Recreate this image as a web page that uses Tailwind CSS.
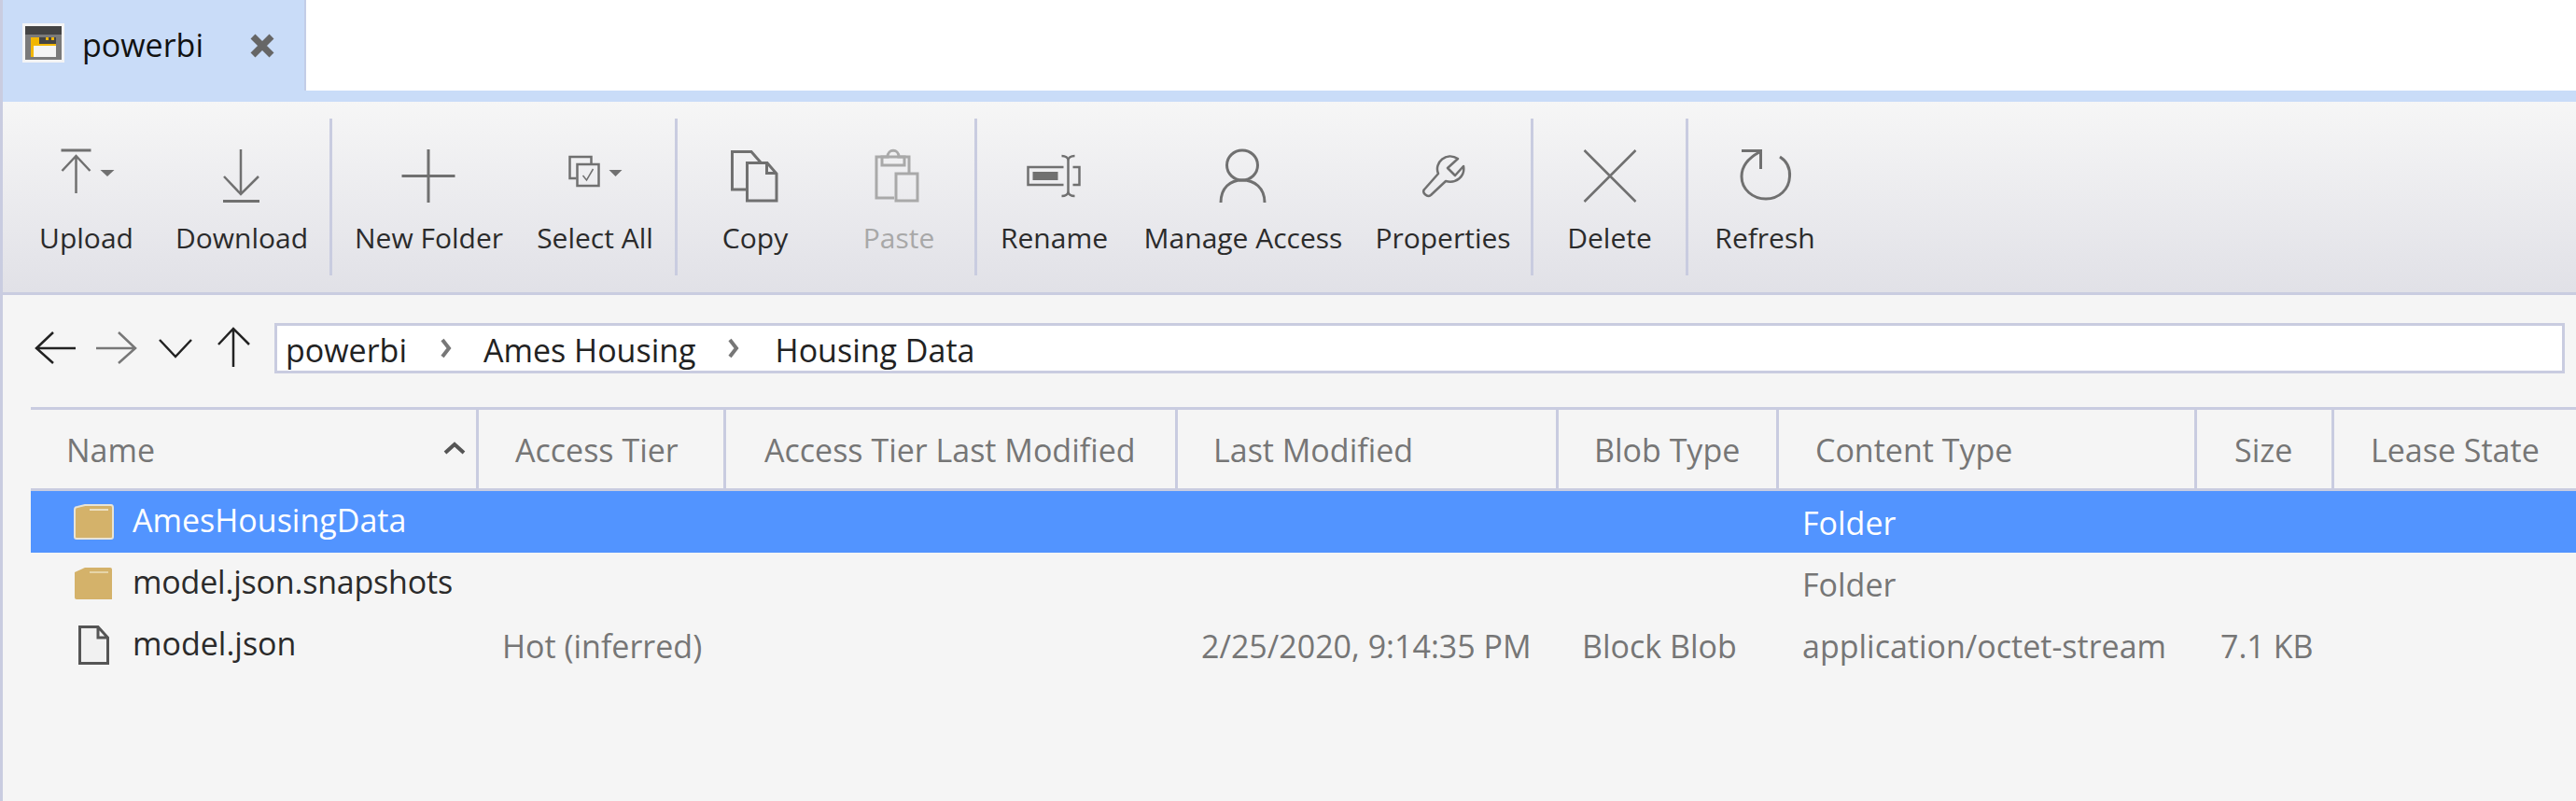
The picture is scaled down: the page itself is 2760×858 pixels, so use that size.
<!DOCTYPE html>
<html>
<head>
<meta charset="utf-8">
<script src="https://cdn.jsdelivr.net/npm/@tailwindcss/browser@4"></script>
</head>
<body class="w-[2760px] h-[858px] overflow-hidden bg-[#f5f5f5] font-['Open_Sans',sans-serif] text-[34px] leading-[44px]">
<div class="flex h-[858px] border-l-[3px] border-[#c9cce0]">
<div class="flex-1 flex flex-col min-w-0">

  <!-- Tab strip -->
  <div class="flex h-[97px] bg-white">
    <div class="w-[325px] bg-[#c9dcf8] border-r-[2px] border-[#c3cde6] flex items-start pt-[25px] pl-[21px]">
      <svg width="45" height="42" viewBox="24 25 45 42">
        <rect x="24" y="25" width="45" height="42" fill="#f4f4f4"/>
        <rect x="27" y="28" width="39" height="9" fill="#444"/>
        <rect x="27" y="37" width="39" height="27" fill="#7a7a7a"/>
        <rect x="33" y="40" width="27" height="21" fill="#f2b600"/>
        <rect x="36" y="49" width="24" height="12" fill="#f4f4f4"/>
        <rect x="42" y="40" width="18" height="7" fill="#444"/>
        <rect x="49" y="40" width="3" height="3" fill="#f2b600"/>
        <rect x="55" y="40" width="3" height="3" fill="#f2b600"/>
      </svg>
      <span class="ml-[19px] text-[#111] mt-[1px]">powerbi</span>
      <svg class="ml-[50px] mt-[11px]" width="26" height="26" viewBox="0 0 26 26">
        <path d="M3 3 L23 23 M23 3 L3 23" stroke="#666" stroke-width="7" fill="none"/>
      </svg>
    </div>
    <div class="flex-1"></div>
  </div>
  <div class="h-[12px] bg-[#c9dcf8]"></div>

  <!-- Toolbar -->
  <div class="h-[204px] bg-gradient-to-b from-[#f6f6f6] to-[#e1e1e7] flex items-stretch py-[18px] text-[#2b2b2b] text-[30px] leading-[40px]">
    <div class="w-[179px] flex flex-col items-center pt-[31px]">
      <svg width="80" height="60" viewBox="52.5 158 80 60" fill="none" stroke="#707070" stroke-width="2.5">
        <path d="M65 161 H97" stroke-width="3"/><path d="M81 207 V168 M66 183 L81 167 L96 183"/>
        <path d="M107 182 H122 L114.5 189 Z" fill="#707070" stroke="none"/>
      </svg>
      <span class="mt-[17px]">Upload</span>
    </div>
    <div class="w-[154px] flex flex-col items-center pt-[31px]">
      <svg width="80" height="60" viewBox="219 158 80 60" fill="none" stroke="#707070" stroke-width="2.5">
        <path d="M258 160 V207 M240 189 L258 208 L277 189"/><path d="M239 215.500 H278" stroke-width="3"/>
      </svg>
      <span class="mt-[17px]">Download</span>
    </div>
    <div class="w-[3px] ml-[17px] bg-[#c9cce0]"></div>
    <div class="w-[207px] flex flex-col items-center pt-[31px]">
      <svg width="80" height="60" viewBox="419.500 158 80 60" fill="none" stroke="#707070" stroke-width="3">
        <path d="M458.500 160 V217 M430 188.500 H487"/>
      </svg>
      <span class="mt-[17px]">New Folder</span>
    </div>
    <div class="w-[149px] flex flex-col items-center pt-[31px]">
      <svg width="80" height="60" viewBox="597.500 158 80 60" fill="none" stroke="#707070" stroke-width="2.500">
        <path d="M617 191 H610 V168 H633 V175"/><rect x="618" y="176" width="23" height="23"/>
        <path d="M624 188 L628 193 L635 181" stroke-width="1.500"/>
        <path d="M652 182 H666 L659 189 Z" fill="#707070" stroke="none"/>
      </svg>
      <span class="mt-[17px]">Select All</span>
    </div>
    <div class="w-[3px] ml-[11px] bg-[#c9cce0]"></div>
    <div class="w-[166px] flex flex-col items-center pt-[31px]">
      <svg width="80" height="60" viewBox="769 158 80 60" fill="none" stroke="#707070" stroke-width="3">
        <path d="M799 203 H784.500 V162.500 H805 L815 174"/>
        <path d="M800.500 174.500 H822 L832 186 V215 H800.500 Z M821.500 174.500 V185.500 H832"/>
      </svg>
      <span class="mt-[17px]">Copy</span>
    </div>
    <div class="w-[142px] flex flex-col items-center pt-[31px]">
      <svg width="80" height="60" viewBox="923 158 80 60" fill="none" stroke="#a9a9a9" stroke-width="3">
        <path d="M958 212 H939 V168 H974 V185"/>
        <path d="M945 168 V177 H969 V168 H963 C963 159 951 159 951 168 Z"/>
        <rect x="960" y="186" width="23" height="29"/>
      </svg>
      <span class="mt-[17px] text-[#a8a8a8]">Paste</span>
    </div>
    <div class="w-[3px] ml-[10px] bg-[#c9cce0]"></div>
    <div class="w-[165px] flex flex-col items-center pt-[31px]">
      <svg width="80" height="60" viewBox="1089.500 158 80 60" fill="none" stroke="#707070" stroke-width="2.500">
        <path d="M1139 179 H1101 V198 H1139"/>
        <rect x="1106" y="184" width="27" height="9" fill="#707070" stroke="none"/>
        <path d="M1137 167 C1141 167 1144 169 1144 172 V205 C1144 208 1141 210 1137 210 M1151 167 C1147 167 1144 169 1144 172 M1144 205 C1144 208 1147 210 1151 210"/>
        <path d="M1149 179 H1156 V198 H1149"/>
      </svg>
      <span class="mt-[17px]">Rename</span>
    </div>
    <div class="w-[240px] flex flex-col items-center pt-[31px]">
      <svg width="80" height="60" viewBox="1292 158 80 60" fill="none" stroke="#707070" stroke-width="3">
        <ellipse cx="1331" cy="177" rx="16.500" ry="16"/>
        <path d="M1308 217 C1308 201 1318 193 1331 193 C1344 193 1355 201 1355 217"/>
      </svg>
      <span class="mt-[17px]">Manage Access</span>
    </div>
    <div class="w-[188px] flex flex-col items-center pt-[31px]">
      <svg width="80" height="60" viewBox="1506 158 80 60" fill="none" stroke="#707070" stroke-width="2.500" stroke-linejoin="round">
        <path d="M1562 170 L1551 180 L1559 188 L1568 178 C1570 189 1560 197 1549 194 L1533 209 C1529 212 1523 206 1526 203 L1541 186 C1536 174 1550 162 1562 170 Z"/>
      </svg>
      <span class="mt-[17px]">Properties</span>
    </div>
    <div class="w-[3px] bg-[#c9cce0]"></div>
    <div class="w-[163px] flex flex-col items-center pt-[31px]">
      <svg width="80" height="60" viewBox="1684.500 158 80 60" fill="none" stroke="#707070" stroke-width="2.500">
        <path d="M1697 161 L1752 216 M1752 161 L1697 216"/>
      </svg>
      <span class="mt-[17px]">Delete</span>
    </div>
    <div class="w-[3px] bg-[#c9cce0]"></div>
    <div class="w-[164px] flex flex-col items-center pt-[31px]">
      <svg width="80" height="60" viewBox="1851 158 80 60" fill="none" stroke="#707070" stroke-width="3">
        <path d="M1907 168 C1915 173 1918 181 1917.500 189 C1917 203 1906 213 1892 213 C1878 213 1866 203 1866 189 C1866 178 1872 170 1885 163"/>
        <path d="M1866 161.500 H1886.500 V181"/>
      </svg>
      <span class="mt-[17px]">Refresh</span>
    </div>
  </div>
  <div class="h-[3px] bg-[#c9cce0]"></div>

  <!-- Address row -->
  <div class="h-[120px] flex items-start pt-[30px]">
    <div class="flex items-center h-[54px] ml-[33px]">
      <svg width="48" height="48" viewBox="36 348 48 48" fill="none" stroke="#222" stroke-width="2.500"><path d="M39 372 H81 M57 355 L39 372 L57 388"/></svg>
      <svg class="ml-[16px]" width="48" height="48" viewBox="100 348 48 48" fill="none" stroke="#777" stroke-width="2.500"><path d="M103 372 H145 M127 355 L145 372 L127 388"/></svg>
      <svg class="ml-[20px]" width="40" height="48" viewBox="168 350 40 48" fill="none" stroke="#222" stroke-width="2.500"><path d="M171 365 L188 383 L205 365"/></svg>
      <svg class="ml-[22px]" width="40" height="48" viewBox="230 350 40 48" fill="none" stroke="#222" stroke-width="2.500"><path d="M250 394 V354 M234 370 L250 353 L267 370"/></svg>
    </div>
    <div class="ml-[24px] w-[2454px] h-[54px] bg-white border-[3px] border-[#c9cce0] flex items-center pl-[9px] text-[#222]">
      <span class="pt-[3px]">powerbi</span>
      <svg class="ml-[36px]" width="12" height="22" viewBox="0 0 12 22"><path d="M2 2 L9 11 L2 20" stroke="#777" stroke-width="4" fill="none"/></svg>
      <span class="ml-[34px] pt-[3px]">Ames Housing</span>
      <svg class="ml-[34px]" width="12" height="22" viewBox="0 0 12 22"><path d="M2 2 L9 11 L2 20" stroke="#777" stroke-width="4" fill="none"/></svg>
      <span class="ml-[39px] pt-[3px]">Housing Data</span>
    </div>
  </div>

  <!-- Table -->
  <div class="ml-[30px]">
    <div class="grid grid-cols-[480px_265px_484px_408px_236px_448px_147px_1fr] h-[90px] border-y-[3px] border-[#c9cce0] text-[#767676] items-stretch">
      <div class="relative pl-[38px] pt-[2px] border-r-[3px] border-[#c9cce0] flex items-center">Name
        <svg class="absolute left-[442px] top-[34px]" width="24" height="14" viewBox="0 0 24 14"><path d="M2 12 L12 3 L22 12" stroke="#555" stroke-width="4" fill="none"/></svg>
      </div>
      <div class="pl-[39px] pt-[2px] border-r-[3px] border-[#c9cce0] flex items-center">Access Tier</div>
      <div class="pl-[41px] pt-[2px] border-r-[3px] border-[#c9cce0] flex items-center">Access Tier Last Modified</div>
      <div class="pl-[38px] pt-[2px] border-r-[3px] border-[#c9cce0] flex items-center">Last Modified</div>
      <div class="pl-[38px] pt-[2px] border-r-[3px] border-[#c9cce0] flex items-center">Blob Type</div>
      <div class="pl-[39px] pt-[2px] border-r-[3px] border-[#c9cce0] flex items-center">Content Type</div>
      <div class="pl-[40px] pt-[2px] border-r-[3px] border-[#c9cce0] flex items-center">Size</div>
      <div class="pl-[39px] pt-[2px] flex items-center">Lease State</div>
    </div>

    <div class="grid grid-cols-[480px_265px_484px_408px_236px_448px_147px_1fr] h-[66px] bg-[#5294ff] text-white items-center">
      <div class="flex items-center pl-[46px]">
        <svg width="43" height="38" viewBox="0 0 43 38"><path d="M1 6 Q1 3 4 3 L12 1 H40 Q42 1 42 4 V35 Q42 37 40 37 H3 Q1 37 1 35 Z" fill="#d4b26a" stroke="#e9e4d6" stroke-width="2"/><rect x="17" y="5" width="20" height="2" fill="#ece0c2"/></svg>
        <span class="ml-[20px] mb-[4px]">AmesHousingData</span>
      </div>
      <div></div><div></div><div></div><div></div>
      <div class="pl-[25px] pt-[2px]">Folder</div>
      <div></div><div></div>
    </div>

    <div class="grid grid-cols-[480px_265px_484px_408px_236px_448px_147px_1fr] h-[66px] text-[#767676] items-center">
      <div class="flex items-center pl-[47px] text-[#2b2b2b]">
        <svg width="40" height="34" viewBox="0 0 40 34"><path d="M0 5 L11 0 H38 Q40 0 40 2 V34 H2 Q0 34 0 32 Z" fill="#d4b26a"/><rect x="16" y="4" width="20" height="2" fill="#e6d5a8"/></svg>
        <span class="ml-[22px] mb-[4px] tracking-[-0.2px]">model.json.snapshots</span>
      </div>
      <div></div><div></div><div></div><div></div>
      <div class="pl-[25px] pt-[2px]">Folder</div>
      <div></div><div></div>
    </div>

    <div class="grid grid-cols-[480px_265px_484px_408px_236px_448px_147px_1fr] h-[66px] text-[#767676] items-center">
      <div class="flex items-center pl-[51px] text-[#2b2b2b]">
        <svg width="33" height="42" viewBox="0 0 33 42"><path d="M1.500 1.500 H21 L31.500 13 V40.500 H1.500 Z M21 1.500 V13 H31.500" fill="#f1f1f1" stroke="#555" stroke-width="3"/></svg>
        <span class="ml-[25px] mb-[4px]">model.json</span>
      </div>
      <div class="pl-[25px] pt-[2px]">Hot (inferred)</div>
      <div></div>
      <div class="pl-[25px] pt-[2px]">2/25/2020, 9:14:35 PM</div>
      <div class="pl-[25px] pt-[2px]">Block Blob</div>
      <div class="pl-[25px] pt-[2px]">application/octet-stream</div>
      <div class="pl-[25px] pt-[2px]">7.1 KB</div>
      <div></div>
    </div>
  </div>
</div>
</div>
</body>
</html>
